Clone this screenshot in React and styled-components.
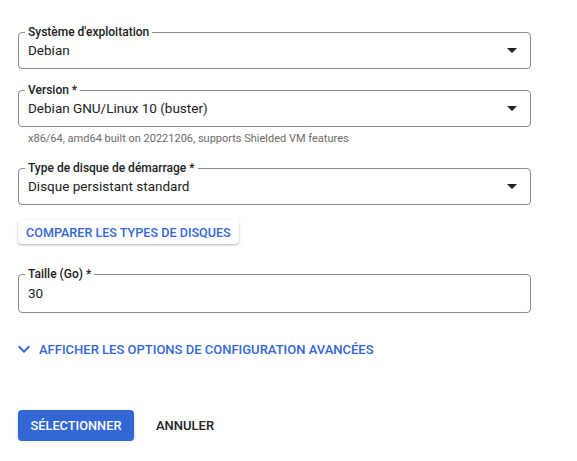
import styled, { createGlobalStyle } from 'styled-components';

const Global = createGlobalStyle`
  body {
    margin: 0;
    background: #fff;
    font-family: Roboto, "Liberation Sans", Arial, sans-serif;
    color: #202124;
  }
`;

const Page = styled.div`
  width: 513px;
  padding: 26px 0 0 18px;
  display: flex;
  flex-direction: column;
`;

const Field = styled.fieldset`
  margin: 0 0 ${p => p.$gap ?? 15}px 0;
  padding: 0 13px 0 9px;
  border: 1px solid #8a8a8a;
  border-radius: 4px;
  min-width: 0;
`;

const Legend = styled.legend`
  padding: 0 3px;
  margin-left: -3px;
  font-size: 12px;
  line-height: 12px;
  font-weight: 500;
  color: #202124;
`;

const Value = styled.div`
  display: flex;
  align-items: center;
  justify-content: space-between;
  height: ${p => p.$h || 24}px;
  padding-bottom: 6px;
  font-size: 13.5px;
  color: #202124;
`;

const Caret = styled.span`
  width: 0;
  height: 0;
  border-left: 5px solid transparent;
  border-right: 5px solid transparent;
  border-top: 5px solid #202124;
`;

const Helper = styled.div`
  font-size: 11px;
  line-height: 13px;
  color: #6b6b6b;
  margin: -10px 0 17px 10px;
`;

const OutlinedButton = styled.button`
  align-self: flex-start;
  height: 24px;
  padding: 0 8px;
  margin: 0 0 24px 0;
  border: none;
  border-radius: 4px;
  background: #fff;
  box-shadow: 0 1px 3px rgba(60, 64, 67, 0.3), 0 1px 1px rgba(60, 64, 67, 0.12);
  color: #3367d6;
  font-family: inherit;
  font-size: 12.6px;
  font-weight: 500;
`;

const Toggle = styled.div`
  display: flex;
  align-items: center;
  gap: 9px;
  margin-top: 28px;
  color: #3367d6;
  font-size: 13px;
  font-weight: 500;
  height: 16px;
`;

const Actions = styled.div`
  display: flex;
  align-items: center;
  gap: 10px;
  margin-top: 53px;
`;

const Primary = styled.button`
  height: 31px;
  width: 116px;
  border: none;
  border-radius: 4px;
  background: #3367d6;
  color: #fff;
  font-family: inherit;
  font-size: 12.8px;
  font-weight: 500;
  box-shadow: 0 1px 3px rgba(60, 64, 67, 0.3);
`;

const TextButton = styled.button`
  height: 31px;
  padding: 0 12px;
  border: none;
  background: transparent;
  color: #202124;
  font-family: inherit;
  font-size: 13px;
  font-weight: 500;
`;

const Select = ({ label, value, gap }) => (
  <Field $gap={gap}>
    <Legend>{label}</Legend>
    <Value>
      {value}
      <Caret />
    </Value>
  </Field>
);

export default function App() {
  return (
    <>
      <Global />
      <Page>
        <Select label="Système d'exploitation" value="Debian" />
        <Select label="Version *" value="Debian GNU/Linux 10 (buster)" />
        <Helper>x86/64, amd64 built on 20221206, supports Shielded VM features</Helper>
        <Select label="Type de disque de démarrage *" value="Disque persistant standard" gap={15} />
        <OutlinedButton>COMPARER LES TYPES DE DISQUES</OutlinedButton>
        <Field $gap={0}>
          <Legend>Taille (Go) *</Legend>
          <Value $h={26}>30</Value>
        </Field>
        <Toggle>
          <svg width="12" height="8" viewBox="0 0 12 8">
            <path d="M1.4 0.6 L6 5.2 L10.6 0.6 L12 2 L6 8 L0 2 Z" fill="#3367d6" />
          </svg>
          AFFICHER LES OPTIONS DE CONFIGURATION AVANCÉES
        </Toggle>
        <Actions>
          <Primary>SÉLECTIONNER</Primary>
          <TextButton>ANNULER</TextButton>
        </Actions>
      </Page>
    </>
  );
}
